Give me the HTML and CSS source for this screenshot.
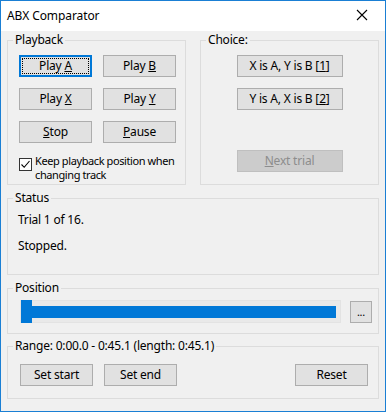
FILE: index.html
```html
<!DOCTYPE html>
<html lang="en">
<head>
    <meta charset="UTF-8">
    <title>ABX Comparator</title>
    <link rel="stylesheet" href="styles.css">
</head>
<body>
    <div class="window">
        <div class="titlebar">
            <span class="title">ABX Comparator</span>
            <span class="close">
                <svg width="12" height="12" viewBox="0 0 12 12"><path d="M1 1 L11 11 M11 1 L1 11" stroke="#000" stroke-width="1.1" fill="none"/></svg>
            </span>
        </div>

        <div class="client">
            <div class="top-row">
                <!-- Playback -->
                <fieldset class="group">
                    <legend>Playback</legend>
                    <div class="group-body playback">
                        <div class="btn-grid">
                            <button class="btn default">Play <u>A</u></button>
                            <button class="btn">Play <u>B</u></button>
                            <button class="btn">Play <u>X</u></button>
                            <button class="btn">Play <u>Y</u></button>
                            <button class="btn"><u>S</u>top</button>
                            <button class="btn"><u>P</u>ause</button>
                        </div>
                        <label class="check">
                            <span class="box">
                                <svg width="11" height="11" viewBox="0 0 11 11"><path d="M1.5 5.5 L4.2 8.3 L9.5 2" stroke="#000" stroke-width="1.1" fill="none"/></svg>
                            </span>
                            <span>Keep playback position when<br>changing track</span>
                        </label>
                    </div>
                </fieldset>

                <!-- Choice -->
                <fieldset class="group">
                    <legend>Choice:</legend>
                    <div class="group-body choice">
                        <button class="btn wide">X is A, Y is B [<u>1</u>]</button>
                        <button class="btn wide">Y is A, X is B [<u>2</u>]</button>
                        <button class="btn wide disabled"><u>N</u>ext trial</button>
                    </div>
                </fieldset>
            </div>

            <fieldset class="group spaced">
                <legend>Status</legend>
                <div class="group-body status">
                    <p>Trial 1 of 16.</p>
                    <p class="second">Stopped.</p>
                </div>
            </fieldset>

            <fieldset class="group spaced">
                <legend>Position</legend>
                <div class="group-body position">
                    <div class="slider">
                        <div class="thumb"></div>
                        <div class="fill"></div>
                    </div>
                    <button class="btn small">...</button>
                </div>
            </fieldset>

            <fieldset class="group range-group">
                <legend>Range: 0:00.0 - 0:45.1 (length: 0:45.1)</legend>
                <div class="group-body range">
                    <button class="btn">Set start</button>
                    <button class="btn">Set end</button>
                    <button class="btn reset">Reset</button>
                </div>
            </fieldset>
        </div>
    </div>
</body>
</html>
```

FILE: styles.css
```css
body {
    margin: 0;
    padding: 0;
    font-family: "Noto Sans", "Open Sans", sans-serif;
    font-size: 12px;
    color: #000;
    background-color: #f0f0f0;
}

.window {
    width: 386px;
    height: 412px;
    box-sizing: border-box;
    border: 1px solid #1a7fd4;
    background-color: #f0f0f0;
    display: flex;
    flex-direction: column;
}

/* Title bar */
.titlebar {
    height: 30px;
    background-color: #fff;
    display: flex;
    align-items: center;
    justify-content: space-between;
    padding-left: 6px;
    flex-shrink: 0;
}

.title {
    font-size: 12px;
    letter-spacing: -0.1px;
    margin-top: -2px;
}

.close {
    width: 46px;
    display: flex;
    justify-content: center;
    margin-top: -2px;
}

/* Client area */
.client {
    padding: 2px 6px 0 6px;
}

.group {
    margin: 0;
    border: 1px solid #dcdcdc;
    padding: 0;
    min-width: 0;
}

.group legend {
    padding: 0 2px;
    margin-left: 5px;
    line-height: 14px;
    letter-spacing: -0.2px;
}

.group.spaced {
    margin-top: 6px;
}

.group.range-group {
    margin-top: 5px;
}

.top-row {
    display: grid;
    grid-template-columns: 179px 179px;
    column-gap: 14px;
}

.btn {
    font-family: inherit;
    font-size: 12px;
    letter-spacing: -0.2px;
    width: 73px;
    height: 22px;
    padding: 0;
    background-color: #e1e1e1;
    border: 1px solid #adadad;
    border-radius: 0;
    color: #000;
    line-height: 18px;
}

.btn.default {
    border-color: #0078d7;
    box-shadow: inset 0 0 0 1px #0078d7;
    outline: 1px dotted #000;
    outline-offset: -4px;
}

.btn.disabled {
    background-color: #cccccc;
    border-color: #bfbfbf;
    color: #8d8d8d;
}

/* Playback */
.playback {
    padding: 8px 0 2px 11px;
}

.btn-grid {
    display: grid;
    grid-template-columns: 73px 73px;
    column-gap: 11px;
    row-gap: 11px;
}

.check {
    display: flex;
    align-items: flex-start;
    margin-top: 11px;
    font-size: 11px;
    line-height: 14px;
    letter-spacing: -0.4px;
    white-space: nowrap;
}

.check .box {
    width: 11px;
    height: 11px;
    border: 1px solid #333;
    background-color: #fff;
    margin-top: 4px;
    margin-right: 3px;
    flex-shrink: 0;
}

.check .box svg {
    display: block;
}

/* Choice */
.choice {
    display: flex;
    flex-direction: column;
    align-items: center;
    padding-top: 8px;
}

.btn.wide {
    width: 106px;
    margin-bottom: 11px;
}

.btn.wide.disabled {
    margin-top: 29px;
    margin-bottom: 0;
}

/* Status */
.status {
    padding: 8px 10px 21px;
}

.status p {
    margin: 0;
    line-height: 14px;
    letter-spacing: -0.2px;
}

.status p.second {
    margin-top: 12px;
}

/* Position */
.position {
    display: flex;
    align-items: center;
    gap: 9px;
    padding: 5px 6px 10px 12px;
}

.slider {
    flex: 1;
    height: 21px;
    border: 1px solid #e3e3e3;
    background-color: #e9e9e9;
    display: flex;
    align-items: center;
    padding-right: 4px;
}

.thumb {
    width: 11px;
    height: 23px;
    background-color: #0078d7;
}

.fill {
    flex: 1;
    height: 12px;
    background-color: #0078d7;
}

.btn.small {
    width: 22px;
    height: 22px;
    line-height: 16px;
    font-size: 11px;
}

/* Range */
.range {
    display: flex;
    gap: 11px;
    padding: 11px 10px 12px 12px;
}

.btn.reset {
    margin-left: auto;
}
```
